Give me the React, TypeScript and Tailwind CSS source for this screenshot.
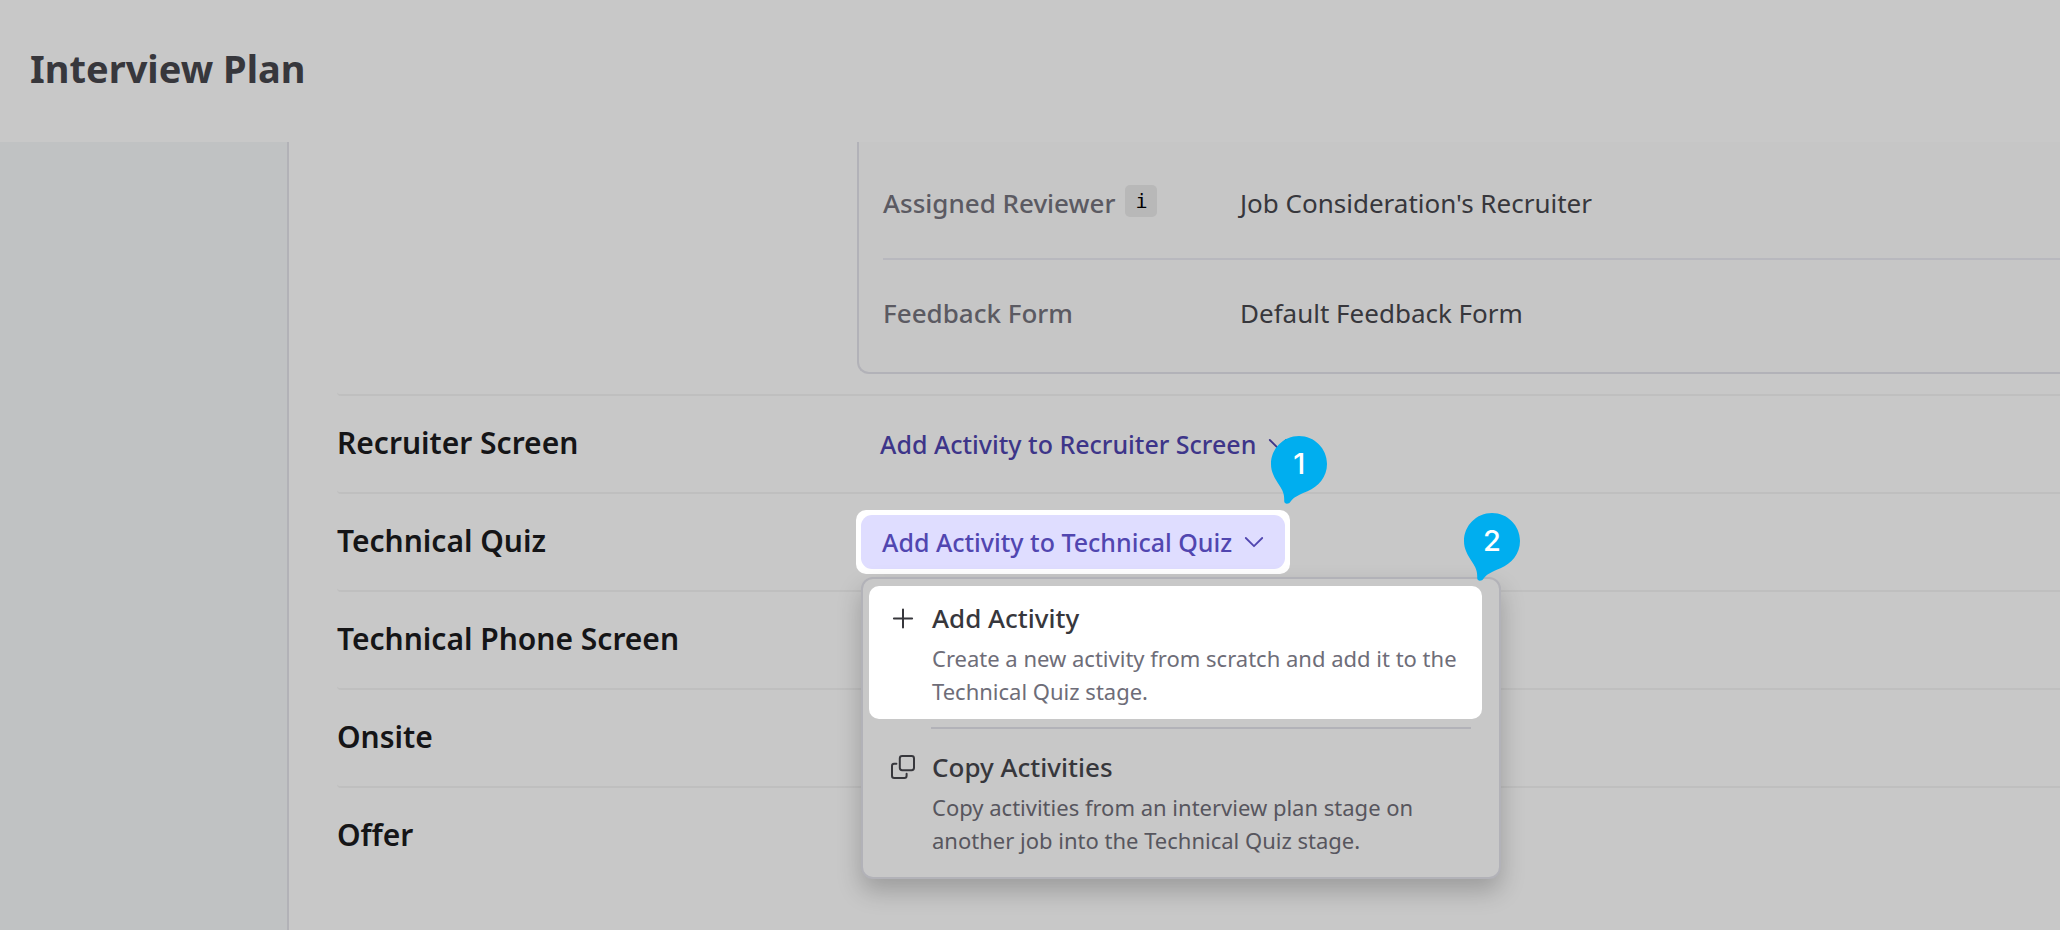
import React, { useState } from 'react';

const stages = [
  { name: 'Recruiter Screen' },
  { name: 'Technical Quiz' },
  { name: 'Technical Phone Screen' },
  { name: 'Onsite' },
  { name: 'Offer' },
];

const Chevron = () => (
  <svg className="w-5 h-5" viewBox="0 0 20 20" fill="none" stroke="currentColor" strokeWidth="1.8" strokeLinecap="round" strokeLinejoin="round">
    <path d="M1.8 6 L10 14.2 L18.2 6" />
  </svg>
);

const PlusIcon = () => (
  <svg className="w-6 h-6" viewBox="0 0 24 24" fill="none" stroke="currentColor" strokeWidth="2" strokeLinecap="round">
    <path d="M12 3.4 V21.6 M2.9 12.5 H21.1" />
  </svg>
);

const CopyIcon = () => (
  <svg className="w-6 h-6" viewBox="0 0 24 24" fill="none" stroke="currentColor" strokeWidth="2" strokeLinecap="round" strokeLinejoin="round">
    <rect x="8.8" y="1" width="14.2" height="14.2" rx="2.4" />
    <path d="M5.4 8.8 H3.2 A2.2 2.2 0 0 0 1 11 V20.8 A2.2 2.2 0 0 0 3.2 23 H13.4 A2.2 2.2 0 0 0 15.6 20.8 V18.8" />
  </svg>
);

// Numbered marker, the tail points down and to the left
const Pin = ({ label, className }: { label: string; className: string }) => (
  <div className={`absolute w-14 h-[68px] ${className}`}>
    <svg className="absolute inset-0" width="56" height="68" viewBox="0 0 56 68" fill="#00aeef">
      <path d="M28 0 C43.5 0 56 12.5 56 28 C56 41 47.5 50.5 36.5 55.2 C27.5 59 22.8 61 19.6 65.5 C18 68.6 13.2 68.6 13.2 65 C13.4 58.5 12 55 8.6 49.8 C3.4 41.6 0 36 0 28 C0 12.5 12.5 0 28 0 Z" />
    </svg>
    <span className="relative block text-center font-[Inter,sans-serif] text-[29px] leading-[56px] font-medium text-white">{label}</span>
  </div>
);

const MenuItem = ({ icon, title, text, className }: { icon: React.ReactNode; title: string; text: string; className: string }) => (
  <button role="menuitem" className={`flex w-full items-start rounded-[10px] pt-3.5 pb-[11px] pl-[22px] text-left ${className}`}>
    <span className="flex h-9 w-6 mr-[17px] shrink-0 items-center text-[#37373c]">{icon}</span>
    <span className="flex flex-col gap-1.5">
      <span className="text-[26px] leading-9 font-medium text-[#37373c]">{title}</span>
      <span className="text-[22px] leading-[33px]">{text}</span>
    </span>
  </button>
);

const App = () => {
  const [open, setOpen] = useState(true);

  return (
    <div className="min-h-screen flex flex-col overflow-hidden bg-[#c8c8c8] font-['Noto_Sans',sans-serif] text-[#37373c]">
      <header className="h-[142px] shrink-0 flex items-center px-[30px] pb-1.5">
        <h1 className="text-[38px] leading-[54px] font-bold">Interview Plan</h1>
      </header>

      <div className="flex-1 flex">
        <aside className="w-[289px] shrink-0 bg-[#c0c2c3] border-r-2 border-[#b2b2b7]" />

        <main className="flex-1 min-w-0 pl-12">
          {/* Settings of the stage that is scrolled under the header */}
          <section className="pl-[520px] pb-5 border-b-2 border-[#bfbfbf] rounded-bl-[4px]">
            <dl className="bg-[#c6c6c6] border-l-2 border-b-2 border-[#b2b2b8] rounded-bl-xl pl-6 pt-2 pb-1 text-[26px] leading-9">
              <div className="h-[110px] flex items-center pb-0.5 border-b-2 border-[#b8b8be]">
                <dt className="w-[357px] shrink-0 flex items-start gap-2.5 font-medium text-[#5b5a62]">
                  Assigned Reviewer
                  <button aria-label="About the reviewer" className="w-8 h-8 rounded-[5px] bg-[#b8b8b8] text-black font-['DejaVu_Sans_Mono',monospace] text-[20px] leading-8">i</button>
                </dt>
                <dd>Job Consideration's Recruiter</dd>
              </div>
              <div className="h-[108px] flex items-center pb-0.5">
                <dt className="w-[357px] shrink-0 font-medium text-[#5b5a62]">Feedback Form</dt>
                <dd>Default Feedback Form</dd>
              </div>
            </dl>
          </section>

          {stages.map(stage => (
            <section key={stage.name} className="h-[98px] flex items-center border-b-2 border-[#bfbfbf] rounded-bl-[4px] last:border-b-transparent">
              <h2 className="w-[519px] shrink-0 pb-0.5 text-[30px] leading-10 font-semibold text-[#151517]">{stage.name}</h2>
              {stage.name === 'Recruiter Screen' && (
                <button className="h-[54px] flex items-center gap-3 px-6 text-[25px] leading-8 font-medium text-[#3d3589]">
                  Add Activity to {stage.name}
                  <Chevron />
                </button>
              )}
              {stage.name === 'Technical Quiz' && (
                <div className="relative rounded-[10px] bg-white p-[5px]">
                  <button
                    aria-expanded={open}
                    onClick={() => setOpen(!open)}
                    className="h-[54px] flex items-center gap-3 px-[21px] rounded-[11px] bg-[#dfddff] text-[25px] leading-8 font-medium text-[#5146b0]"
                  >
                    Add Activity to {stage.name}
                    <Chevron />
                  </button>
                  <Pin label="1" className="-top-[74px] -right-[37px]" />
                  {open && (
                    <div role="menu" className="absolute z-10 top-full left-[5px] mt-[3px] w-[640px] rounded-xl border-2 border-[#b2b2b8] bg-[#c8c8c8] pt-[7px] pb-[9px] pl-1.5 pr-[17px] shadow-[0_12px_24px_rgba(0,0,0,0.22)]">
                      <MenuItem
                        icon={<PlusIcon />}
                        title="Add Activity"
                        text="Create a new activity from scratch and add it to the Technical Quiz stage."
                        className="bg-white text-[#6e6d78]"
                      />
                      <hr className="mt-2 mb-1.5 ml-[62px] mr-[11px] border-t-2 border-[#b2b2b8]" />
                      <MenuItem
                        icon={<CopyIcon />}
                        title="Copy Activities"
                        text="Copy activities from an interview plan stage on another job into the Technical Quiz stage."
                        className="text-[#57565e]"
                      />
                      <Pin label="2" className="-top-[66px] -right-[21px]" />
                    </div>
                  )}
                </div>
              )}
            </section>
          ))}
        </main>
      </div>
    </div>
  );
};

export default App;
